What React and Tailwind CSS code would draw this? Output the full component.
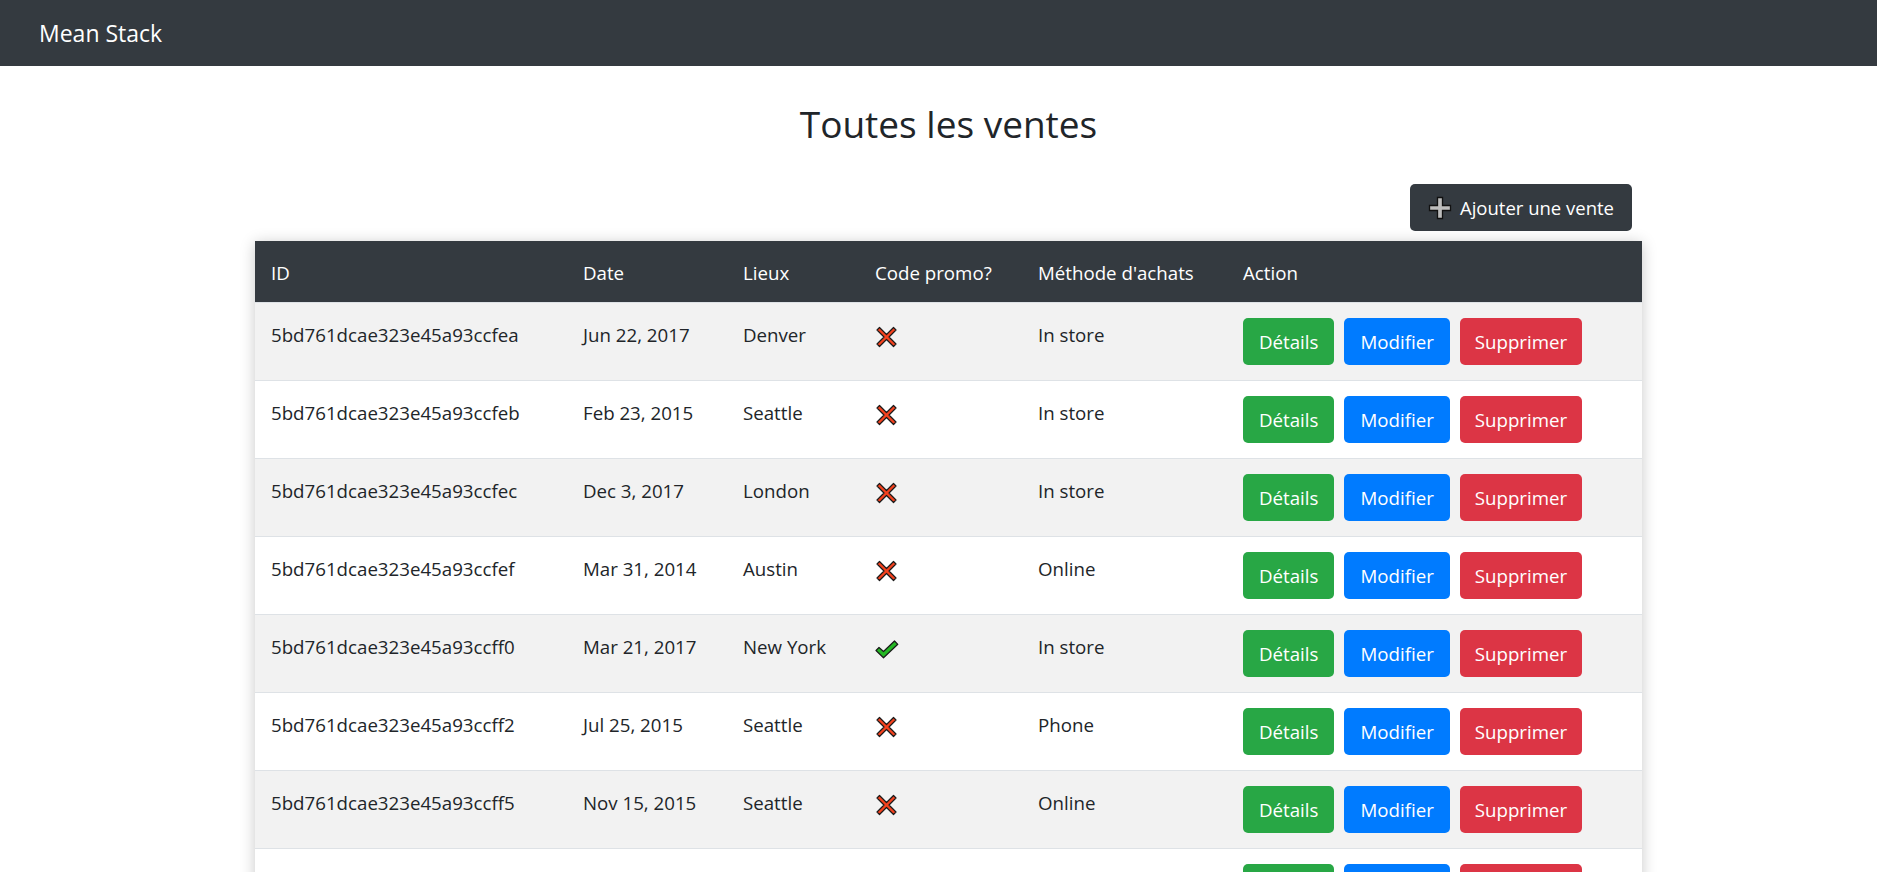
import React from 'react'

const sales = [
  { id: '5bd761dcae323e45a93ccfea', date: 'Jun 22, 2017', place: 'Denver', promo: false, method: 'In store' },
  { id: '5bd761dcae323e45a93ccfeb', date: 'Feb 23, 2015', place: 'Seattle', promo: false, method: 'In store' },
  { id: '5bd761dcae323e45a93ccfec', date: 'Dec 3, 2017', place: 'London', promo: false, method: 'In store' },
  { id: '5bd761dcae323e45a93ccfef', date: 'Mar 31, 2014', place: 'Austin', promo: false, method: 'Online' },
  { id: '5bd761dcae323e45a93ccff0', date: 'Mar 21, 2017', place: 'New York', promo: true, method: 'In store' },
  { id: '5bd761dcae323e45a93ccff2', date: 'Jul 25, 2015', place: 'Seattle', promo: false, method: 'Phone' },
  { id: '5bd761dcae323e45a93ccff5', date: 'Nov 15, 2015', place: 'Seattle', promo: false, method: 'Online' },
  { id: '5bd761dcae323e45a93ccff8', date: 'Aug 9, 2016', place: 'Denver', promo: false, method: 'In store' },
]

function CrossIcon() {
  return (
    <svg width="23" height="22" viewBox="0 0 22 22" className="inline-block align-middle">
      <polygon
        points="4,1.5 11,8.5 18,1.5 20.5,4 13.5,11 20.5,18 18,20.5 11,13.5 4,20.5 1.5,18 8.5,11 1.5,4"
        fill="#f5421e"
        stroke="#1a1a1a"
        strokeWidth="1.2"
        strokeLinejoin="round"
      />
    </svg>
  )
}

function CheckIcon() {
  return (
    <svg width="24" height="19" viewBox="0 0 24 19" className="inline-block align-middle">
      <polygon
        points="1,10.5 4,7.5 8.5,11.5 19.5,1 22.8,4.3 8.5,17.8"
        fill="#24b824"
        stroke="#1a1a1a"
        strokeWidth="1.2"
        strokeLinejoin="round"
      />
    </svg>
  )
}

function PlusIcon() {
  return (
    <svg width="24" height="24" viewBox="0 0 24 24" className="block">
      <polygon
        points="9.5,1.5 14.5,1.5 14.5,9.5 22.5,9.5 22.5,14.5 14.5,14.5 14.5,22.5 9.5,22.5 9.5,14.5 1.5,14.5 1.5,9.5 9.5,9.5"
        fill="#bdbdbd"
        stroke="#111"
        strokeWidth="1.3"
      />
    </svg>
  )
}

export default function App() {
  return (
    <div
      className="min-h-screen bg-white text-[#212529]"
      style={{ fontFamily: '"Open Sans", "Noto Sans", sans-serif' }}
    >
      <nav className="h-[66px] bg-[#343a40] flex items-center pl-[39px]">
        <span className="text-white text-[23px]">Mean Stack</span>
      </nav>

      <main className="pl-[255px] pr-[235px]">
        <h1 className="text-center text-[37px] leading-[1.2] font-normal mt-[36px]">Toutes les ventes</h1>

        <div className="flex justify-end pr-[10px] mt-[38px]">
          <button className="h-[47px] w-[222px] flex items-center justify-center gap-[8px] bg-[#343a40] text-white text-[18.5px] rounded-[5px]">
            <PlusIcon />
            Ajouter une vente
          </button>
        </div>

        <table className="mt-[10px] w-full table-fixed border-collapse text-[18.7px] leading-[1.5] shadow-[0_2px_14px_rgba(0,0,0,0.22)]">
          <colgroup>
            <col className="w-[312px]" />
            <col className="w-[160px]" />
            <col className="w-[132px]" />
            <col className="w-[163px]" />
            <col className="w-[205px]" />
            <col />
          </colgroup>
          <thead>
            <tr className="bg-[#343a40] text-white h-[61px]">
              {['ID', 'Date', 'Lieux', 'Code promo?', "Méthode d'achats", 'Action'].map(h => (
                <th key={h} className="text-left font-normal px-4 pt-[18px] pb-[15px] align-top">{h}</th>
              ))}
            </tr>
          </thead>
          <tbody>
            {sales.map((s, i) => (
              <tr key={s.id} className={i % 2 === 0 ? 'bg-[#f2f2f2] border-t border-[#dee2e6]' : 'bg-white border-t border-[#dee2e6]'}>
                <td className="px-4 pt-[18px] align-top">{s.id}</td>
                <td className="px-4 pt-[18px] align-top">{s.date}</td>
                <td className="px-4 pt-[18px] align-top">{s.place}</td>
                <td className="px-4 pt-[18px] align-top">
                  {s.promo ? <CheckIcon /> : <CrossIcon />}
                </td>
                <td className="px-4 pt-[18px] align-top">{s.method}</td>
                <td className="px-4 pt-[15px] pb-[15px] align-top">
                  <div className="flex gap-[10px]">
                    <button className="h-[47px] px-[16px] bg-[#28a745] text-white rounded-[5px]">Détails</button>
                    <button className="h-[47px] px-[16px] bg-[#007bff] text-white rounded-[5px]">Modifier</button>
                    <button className="h-[47px] px-[15px] bg-[#dc3545] text-white rounded-[5px]">Supprimer</button>
                  </div>
                </td>
              </tr>
            ))}
          </tbody>
        </table>
      </main>
    </div>
  )
}
